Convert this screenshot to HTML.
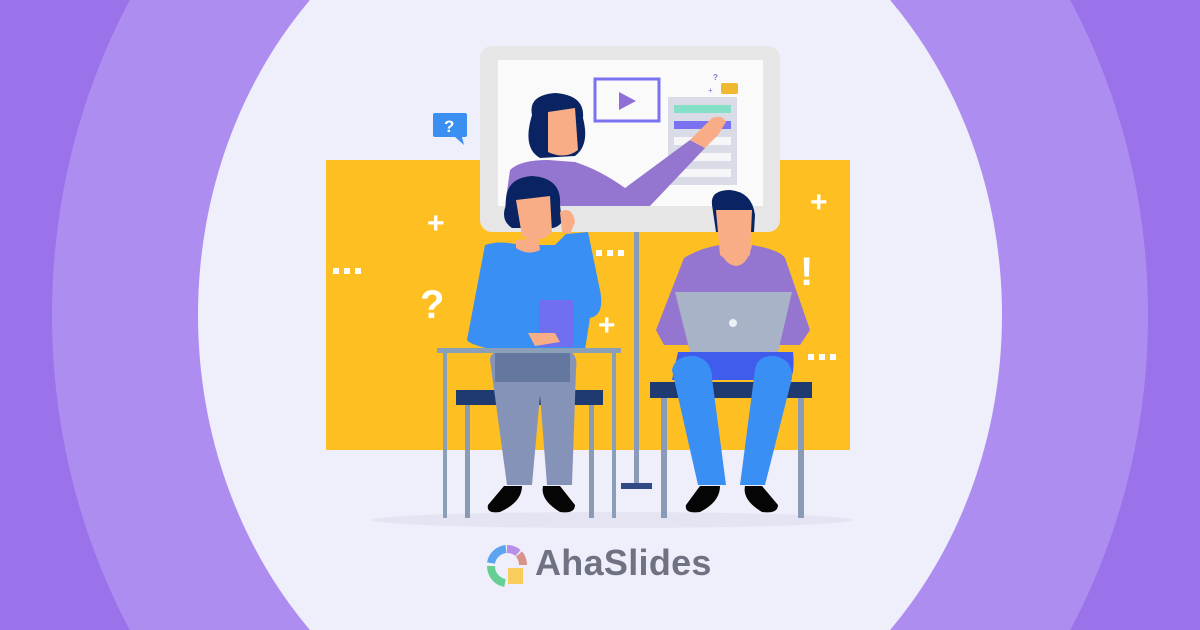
<!DOCTYPE html>
<html><head><meta charset="utf-8"><style>
html,body{margin:0;padding:0;width:1200px;height:630px;overflow:hidden;background:#9a72ea;position:relative}
svg{position:absolute;left:0;top:0;display:block}
.t{position:absolute;left:535px;top:543px;font:bold 36px/40px "Liberation Sans",sans-serif;color:#6f7282;letter-spacing:0.3px}
</style></head><body>
<svg width="1200" height="630" viewBox="0 0 1200 630">
<ellipse cx="600" cy="315" rx="548" ry="613" fill="#ae8df1"/>
<ellipse cx="600" cy="315" rx="402" ry="455" fill="#efeffb"/>
<rect x="326" y="160" width="524" height="290" fill="#fdbf22"/>
<ellipse cx="612" cy="520" rx="240" ry="8" fill="#e4e4f2"/>
<rect x="480" y="46" width="300" height="186" rx="12" fill="#e6e6e6"/>
<rect x="498" y="60" width="265" height="146" fill="#fafafa"/>
<rect x="634" y="232" width="5" height="253" fill="#8a9bb8"/>
<rect x="621" y="483" width="31" height="6" fill="#2f4a85"/>
<rect x="595" y="79" width="64" height="42" fill="none" stroke="#7a72f0" stroke-width="3"/>
<polygon points="619,92 619,110 636,101" fill="#8d6fd6"/>
<rect x="668" y="97" width="69" height="88" fill="#d9dbe6"/>
<rect x="674" y="105" width="57" height="8" fill="#86e0c8"/>
<rect x="674" y="121" width="57" height="8" fill="#7a72f0"/>
<rect x="674" y="137" width="57" height="8" fill="#f6f6f8"/>
<rect x="674" y="153" width="57" height="8" fill="#f6f6f8"/>
<rect x="674" y="169" width="57" height="8" fill="#f6f6f8"/>
<rect x="721" y="83" width="17" height="11" rx="2" fill="#f0b730"/>
<text x="713" y="80" font-family="Liberation Sans" font-weight="bold" font-size="8" fill="#8d6fd6">?</text>
<text x="708" y="93" font-family="Liberation Sans" font-size="8" fill="#8d6fd6">+</text>
<path d="M505 206 L510 170 Q520 160 548 160 L575 162 Q600 170 625 188 L690 140 L705 148 L650 206 Z" fill="#9475d0"/>
<path d="M690 140 L712 118 Q722 114 726 122 L718 135 L705 148 Z" fill="#f8ad86"/>
<path d="M532 115 Q528 95 555 93 Q585 95 583 118 Q590 145 575 156 L540 158 Q522 148 532 115 Z" fill="#0a2463"/>
<path d="M548 112 L575 108 L578 150 Q565 160 548 152 Z" fill="#f8ad86"/>
<rect x="433" y="113" width="34" height="24" rx="2" fill="#3b8ff0"/>
<polygon points="455,137 464,145 462,137" fill="#3b8ff0"/>
<text x="444" y="132" font-family="Liberation Sans" font-weight="bold" font-size="17" fill="#fff">?</text>
<rect x="456" y="390" width="147" height="15" fill="#1f3a70"/>
<rect x="465" y="405" width="5" height="113" fill="#8a9bb8"/>
<rect x="589" y="405" width="5" height="113" fill="#8a9bb8"/>
<path d="M485 245 Q500 240 520 245 L555 245 L566 234 L588 232 L600 290 Q605 315 590 318 L585 350 L495 350 Q470 345 467 340 Z" fill="#3a8ff5"/>
<path d="M516 240 L538 238 L540 250 Q528 256 516 248 Z" fill="#f8ad86"/>
<path d="M506 205 Q504 178 532 176 Q562 178 560 205 L562 222 Q556 230 545 228 L512 228 Q500 220 506 205 Z" fill="#0a2463"/>
<path d="M516 200 L550 196 L552 232 Q540 245 522 236 Z" fill="#f8ad86"/>
<path d="M560 212 Q572 205 575 222 L570 234 L562 232 Z" fill="#f8ad86"/>
<rect x="539" y="300" width="34" height="47" fill="#6f6ff0"/>
<path d="M528 333 L555 333 L560 342 L535 346 Z" fill="#f8ad86"/>
<path d="M490 360 Q490 352 500 352 L570 352 Q578 355 576 370 L572 485 L547 485 L540 395 L532 485 L507 485 Z" fill="#8593b8"/>
<rect x="495" y="352" width="75" height="30" fill="#64779e"/>
<rect x="437" y="348" width="184" height="5" fill="#8aa0b8"/>
<rect x="443" y="353" width="4" height="165" fill="#8aa0b8"/>
<rect x="612" y="353" width="4" height="165" fill="#8aa0b8"/>
<path d="M504 486 L522 486 Q522 502 500 512 Q486 514 488 505 Z" fill="#050505"/>
<path d="M543 486 L560 486 L575 505 Q575 514 560 512 Q540 500 543 486 Z" fill="#050505"/>
<rect x="650" y="382" width="162" height="16" fill="#1f3a70"/>
<rect x="661" y="398" width="6" height="120" fill="#8a9bb8"/>
<rect x="798" y="398" width="6" height="120" fill="#8a9bb8"/>
<path d="M684 258 Q700 248 720 245 L752 245 Q780 250 785 258 L810 330 L800 345 L664 345 L656 330 Z" fill="#9475d0"/>
<path d="M720 245 L752 245 Q748 265 736 266 Q722 264 720 245 Z" fill="#f8ad86"/>
<path d="M712 205 Q710 190 730 190 Q752 192 755 215 L754 232 L716 232 Z" fill="#0a2463"/>
<path d="M716 210 L752 210 L750 255 Q735 268 720 255 Z" fill="#f8ad86"/>
<path d="M678 352 L793 352 Q795 372 790 380 L672 380 Z" fill="#3f5cec"/>
<path d="M672 370 Q675 355 695 356 Q712 360 712 378 L726 485 L698 485 Z" fill="#3a8ff5"/>
<path d="M755 370 Q757 355 775 356 Q793 360 792 378 L765 485 L740 485 Z" fill="#3a8ff5"/>
<path d="M675 292 L792 292 L778 352 L690 352 Z" fill="#a8b3c8"/>
<circle cx="733" cy="323" r="4" fill="#eef0f5"/>
<path d="M700 486 L720 486 Q720 502 700 512 Q684 514 686 505 Z" fill="#050505"/>
<path d="M745 486 L762 486 L778 505 Q778 514 762 512 Q742 500 745 486 Z" fill="#050505"/>
<g fill="#fff" font-family="Liberation Sans" font-weight="bold">
<text x="427" y="233" font-size="30">+</text>
<text x="598" y="335" font-size="30">+</text>
<text x="810" y="212" font-size="30">+</text>
<text x="420" y="318" font-size="40">?</text>
<text x="800" y="285" font-size="40">!</text>
<rect x="333" y="268" width="6" height="6"/><rect x="344" y="268" width="6" height="6"/><rect x="355" y="268" width="6" height="6"/>
<rect x="596" y="250" width="6" height="6"/><rect x="607" y="250" width="6" height="6"/><rect x="618" y="250" width="6" height="6"/>
<rect x="808" y="354" width="6" height="6"/><rect x="819" y="354" width="6" height="6"/><rect x="830" y="354" width="6" height="6"/>
</g>
<g fill="none" stroke-width="8">
<path d="M491 563 A17 17 0 0 1 506 549" stroke="#5ba4f0"/>
<path d="M507 549 A17 17 0 0 1 518 553" stroke="#b78ee8"/>
<path d="M519 554 A17 17 0 0 1 523 565" stroke="#d8948a"/>
<path d="M505 583 A17 17 0 0 1 491 566" stroke="#66cf94"/>
</g>
<rect x="508" y="568" width="15" height="16" fill="#f9cd5c"/>
</svg>
<div class="t">AhaSlides</div>
</body></html>
